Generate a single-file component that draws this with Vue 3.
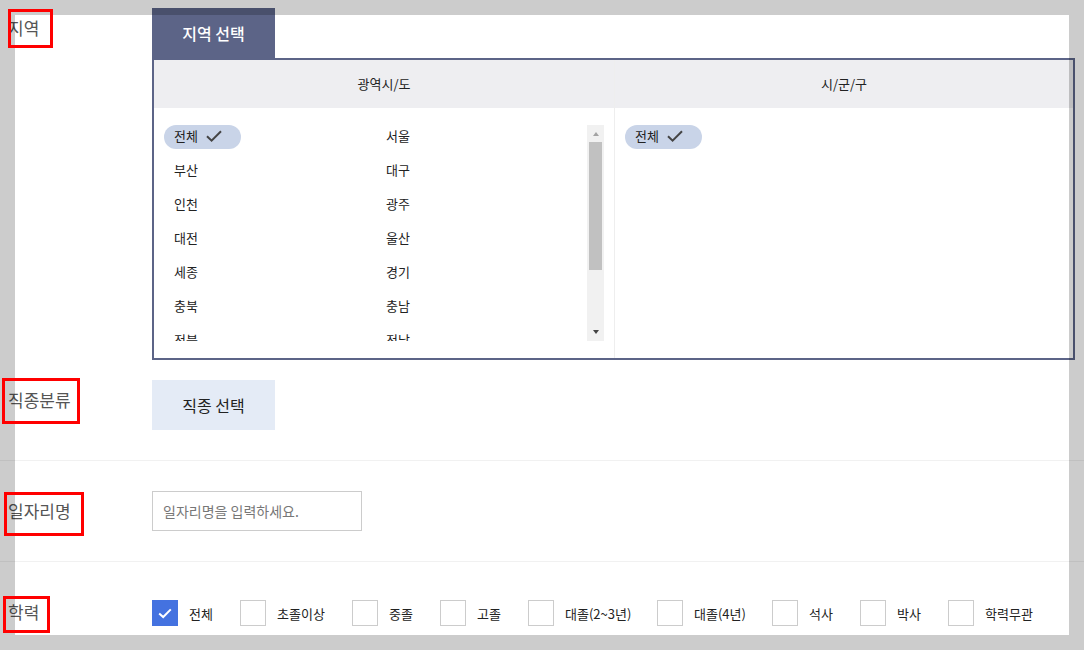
<script setup>
const regions = ['전체', '서울', '부산', '대구', '인천', '광주', '대전', '울산', '세종', '경기', '충북', '충남', '전북', '전남']
const edu = [
  { label: '전체', on: true, cls: 'e1' },
  { label: '초졸이상', cls: 'e2' },
  { label: '중졸', cls: 'e3' },
  { label: '고졸', cls: 'e3' },
  { label: '대졸(2~3년)', cls: 'e4' },
  { label: '대졸(4년)', cls: 'e5' },
  { label: '석사', cls: 'e3' },
  { label: '박사', cls: 'e3' },
  { label: '학력무관', cls: 'e6' },
]
</script>

<template>
  <div class="page">
    <section class="row row-region">
      <div class="label">지역</div>
      <div class="content">
        <button class="tab active">지역 선택</button>
        <div class="panel">
          <div class="col col-left">
            <div class="col-head">광역시/도</div>
            <div class="col-body">
              <ul class="list">
                <li v-for="(r, i) in regions" :key="r" class="item">
                  <span v-if="i === 0" class="pill">{{ r }}
                    <svg class="check" width="16" height="12" viewBox="0 0 16 12"><path d="M1 6.2 L5.6 10.6 L15 1.2" fill="none" stroke="#444" stroke-width="2"/></svg>
                  </span>
                  <span v-else class="plain">{{ r }}</span>
                </li>
              </ul>
              <div class="scrollbar">
                <div class="arrow up"></div>
                <div class="thumb"></div>
                <div class="arrow down"></div>
              </div>
            </div>
          </div>
          <div class="col col-right">
            <div class="col-head">시/군/구</div>
            <div class="col-body">
              <span class="pill">전체
                <svg class="check" width="16" height="12" viewBox="0 0 16 12"><path d="M1 6.2 L5.6 10.6 L15 1.2" fill="none" stroke="#444" stroke-width="2"/></svg>
              </span>
            </div>
          </div>
        </div>
      </div>
    </section>

    <section class="row row-job">
      <div class="label">직종분류</div>
      <div class="content">
        <button class="tab">직종 선택</button>
      </div>
    </section>

    <section class="row row-name">
      <div class="label">일자리명</div>
      <div class="content">
        <input class="text" type="text" placeholder="일자리명을 입력하세요." />
      </div>
    </section>

    <section class="row row-edu">
      <div class="label">학력</div>
      <div class="content checks">
        <label v-for="e in edu" :key="e.label" class="chk" :class="e.cls">
          <span class="box" :class="{ on: e.on }">
            <svg v-if="e.on" width="14" height="11" viewBox="0 0 14 11"><path d="M1.2 5.4 L5.2 9 L12.8 1.4" fill="none" stroke="#fff" stroke-width="2"/></svg>
          </span>
          <span class="chk-text">{{ e.label }}</span>
        </label>
      </div>
    </section>

    <div class="frame"></div>
    <div class="mark m1"></div>
    <div class="mark m2"></div>
    <div class="mark m3"></div>
    <div class="mark m4"></div>
  </div>
</template>

<style>
html, body { margin: 0; background: #fff; overflow: hidden; }
</style>

<style scoped>
.page {
  position: relative;
  width: 1084px;
  height: 650px;
  overflow: hidden;
  background: #fff;
  font-family: "Noto Sans CJK KR", "Noto Sans", sans-serif;
  color: #222;
  font-size: 13px;
}
.row {
  display: flex;
  box-sizing: border-box;
}
.label {
  width: 152px;
  flex: none;
  padding-left: 8px;
  box-sizing: border-box;
  font-size: 17px;
  line-height: 24px;
  color: #555;
}
.content { flex: none; width: 923px; }

.row-region { padding-top: 8px; height: 380px; }
.row-region .label { padding-top: 8px; }
.row-job { height: 81px; border-bottom: 1px solid #f1f1f1; }
.row-job .label { padding-top: 8px; }
.row-name { height: 101px; padding-top: 30px; border-bottom: 1px solid #f1f1f1; }
.row-name .label { padding-top: 8px; }
.row-edu { padding-top: 38px; }

.tab {
  display: block;
  width: 123px;
  height: 50px;
  border: 0;
  padding: 0;
  background: #e4ebf6;
  color: #222;
  font: inherit;
  font-size: 16px;
  font-weight: 400;
}
.tab.active {
  background: #5c6487;
  color: #fff;
  font-weight: 500;
}
.panel {
  display: flex;
  height: 302px;
  box-sizing: border-box;
  border: 2px solid #5c6487;
}
.col { display: flex; flex-direction: column; }
.col-left { width: 460px; flex: none; border-right: 1px solid #eee; }
.col-right { flex: 1; }
.col-head {
  height: 48px;
  flex: none;
  background: #eeeef1;
  text-align: center;
  font-size: 13px;
  line-height: 48px;
}
.col-body {
  flex: 1;
  display: flex;
  align-items: flex-start;
  padding: 17px 10px 0;
}
.list {
  flex: 1;
  list-style: none;
  margin: 0;
  padding: 0;
  height: 216px;
  overflow: hidden;
  display: grid;
  grid-template-columns: 212px 1fr;
  grid-auto-rows: 34px;
}
.item { line-height: 22px; height: 24px; font-size: 13px; }
.plain { padding-left: 10px; }
.pill {
  display: inline-flex;
  align-items: center;
  box-sizing: border-box;
  width: 77px;
  height: 24px;
  padding: 0 0 2px 10px;
  border-radius: 12px;
  background: #c9d4e8;
  font-size: 13px;
  line-height: 22px;
  color: #222;
}
.check { margin-left: 8px; }
.scrollbar {
  flex: none;
  width: 17px;
  height: 216px;
  background: #f1f1f1;
  display: flex;
  flex-direction: column;
  align-items: center;
}
.thumb {
  width: 13px;
  height: 128px;
  background: #c1c1c1;
}
.arrow { width: 0; height: 0; border-left: 3.5px solid transparent; border-right: 3.5px solid transparent; }
.arrow.up { margin-top: 7px; margin-bottom: 6px; border-bottom: 4px solid #a3a3a3; }
.arrow.down { margin-top: 60px; border-top: 4px solid #444; }

.text {
  display: block;
  width: 210px;
  height: 40px;
  box-sizing: border-box;
  border: 1px solid #ccc;
  border-radius: 0;
  padding: 0 10px;
  font: inherit;
  font-size: 14px;
  color: #222;
  outline: none;
}
.text::placeholder { color: #777; opacity: 1; }

.checks { display: flex; }
.chk { display: flex; height: 26px; align-items: center; }
.box {
  width: 26px;
  height: 26px;
  box-sizing: border-box;
  border: 1px solid #ccc;
  display: flex;
  align-items: center;
  justify-content: center;
  margin-right: 11px;
  flex: none;
}
.box.on { background: #4472e0; border-color: #4472e0; }
.chk-text { font-size: 13px; color: #222; }
.e1 { width: 88px; }
.e2 { width: 112px; }
.e3 { width: 88px; }
.e4 { width: 129px; }
.e5 { width: 115px; }
.e6 { width: 100px; }

.frame {
  position: absolute;
  inset: 0;
  box-sizing: border-box;
  border: 15px solid rgba(0, 0, 0, 0.2);
  pointer-events: none;
}
.mark {
  position: absolute;
  box-sizing: border-box;
  border: 3px solid #f00;
  pointer-events: none;
}
.m1 { left: 8px; top: 9px; width: 45px; height: 39px; }
.m2 { left: 2px; top: 378px; width: 78px; height: 46px; }
.m3 { left: 4px; top: 492px; width: 80px; height: 44px; }
.m4 { left: 3px; top: 596px; width: 47px; height: 37px; }
</style>
